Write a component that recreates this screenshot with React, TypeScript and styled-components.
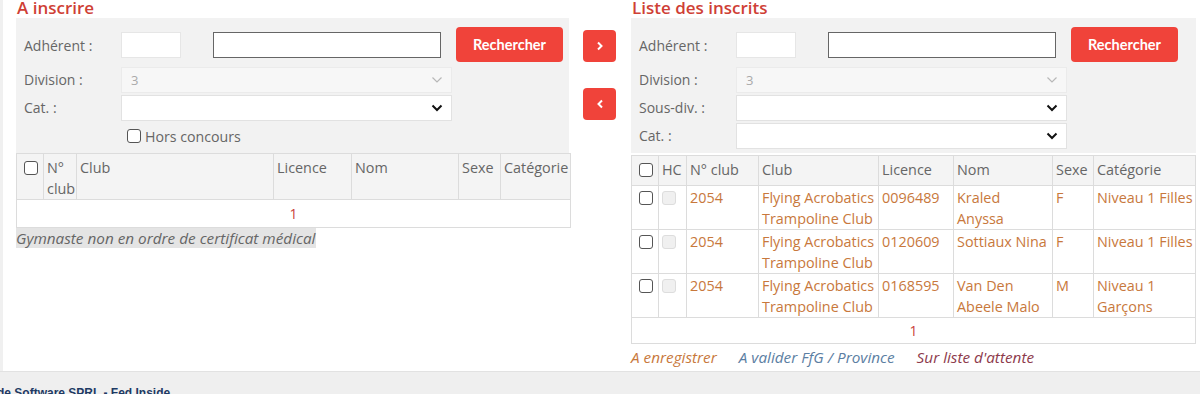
import React from "react";
import styled, { createGlobalStyle } from "styled-components";

const RED = "#f0433a";
const TITLE = "#cf3f36";
const ORANGE = "#c8783c";
const BLUE = "#5b7ea2";
const MAROON = "#8d3a4b";

const GlobalStyle = createGlobalStyle`
  html, body {
    margin: 0;
    padding: 0;
    background: #fff;
    font-family: "Open Sans", "Liberation Sans", sans-serif;
    font-size: 14px;
    color: #555;
  }
  * { box-sizing: border-box; }
`;

const Page = styled.div`
  width: 1200px;
  height: 394px;
  overflow: hidden;
  display: flex;
  flex-direction: column;
`;

const Main = styled.main`
  flex: 1;
  display: flex;
  align-items: flex-start;
  padding-left: 13px;
  border-left: 3px solid #f0f0f0;
`;

const Column = styled.section<{ $width: number }>`
  width: ${(p) => p.$width}px;
  flex: none;
`;

const Title = styled.h2`
  margin: 0;
  height: 18px;
  line-height: 18px;
  font-size: 17px;
  font-weight: 600;
  color: ${TITLE};
  padding-left: 1px;
  margin-top: -1px;
  margin-bottom: 1px;
`;

const Panel = styled.div<{ $width: number }>`
  width: ${(p) => p.$width}px;
  background: #f2f2f2;
  padding: 9px 7px 4px 8px;
  display: grid;
  grid-template-columns: 97px 1fr;
  align-items: center;
  row-gap: 2px;
`;

const Label = styled.label`
  color: #666;
  font-size: 14px;
  line-height: 20px;
`;

const SearchRow = styled.div`
  display: flex;
  align-items: center;
  height: 35px;
  margin-bottom: 3px;
`;

const TextInput = styled.div<{ $width: number; $dark?: boolean; $gap?: number }>`
  width: ${(p) => p.$width}px;
  height: 26px;
  margin-left: ${(p) => p.$gap ?? 0}px;
  background: #fff;
  border: 1px solid ${(p) => (p.$dark ? "#666" : "#e6e6e6")};
  flex: none;
`;

const Search = styled.button`
  margin-left: 15px;
  width: 107px;
  height: 35px;
  border: none;
  border-radius: 4px;
  background: ${RED};
  color: #fff;
  font-family: Lato, "Liberation Sans", sans-serif;
  font-weight: 700;
  font-size: 14.5px;
  padding: 0;
`;

const SelectBox = styled.div<{ $disabled?: boolean; $width: number }>`
  width: ${(p) => p.$width}px;
  height: 26px;
  display: flex;
  align-items: center;
  justify-content: space-between;
  padding: 0 8px 0 9px;
  background: ${(p) => (p.$disabled ? "#f7f7f7" : "#fff")};
  border: 1px solid ${(p) => (p.$disabled ? "#ebebeb" : "#e2e2e2")};
  color: #aaa;
  font-size: 13px;
`;

const CheckRow = styled.div`
  grid-column: 2;
  display: flex;
  align-items: center;
  gap: 4px;
  padding-left: 6px;
  height: 26px;
  color: #666;
  font-size: 14.2px;
`;

const Box = styled.span<{ $disabled?: boolean }>`
  display: inline-block;
  width: 14px;
  height: 14px;
  border-radius: 3px;
  border: 1px solid ${(p) => (p.$disabled ? "#ddd" : "#555")};
  background: ${(p) => (p.$disabled ? "#f0f0f0" : "#fff")};
  flex: none;
`;

const Table = styled.table<{ $width: number }>`
  width: ${(p) => p.$width}px;
  border-collapse: collapse;
  table-layout: fixed;
  border: 1px solid #dcdcdc;
  line-height: 21px;
  font-size: 14.4px;
`;

const HeadRow = styled.tr<{ $h: number }>`
  height: ${(p) => p.$h}px;
`;

const BodyRow = styled.tr`
  height: 44px;
`;

const Th = styled.th<{ $w: number }>`
  width: ${(p) => p.$w}px;
  text-align: left;
  vertical-align: top;
  font-weight: 400;
  color: #666;
  background: #f4f4f4;
  padding: 3px 0 0 3px;
  border-left: 1px solid #dcdcdc;
  border-bottom: 1px solid #dcdcdc;
  &:first-child { border-left: none; padding-left: 7px; }
`;

const Td = styled.td`
  vertical-align: top;
  color: ${ORANGE};
  padding: 1px 0 0 3px;
  border-left: 1px solid #dcdcdc;
  border-bottom: 1px solid #dcdcdc;
  background: #fff;
  white-space: pre-line;
  &:first-child { border-left: none; padding-left: 7px; }
`;

const BoxCell = styled.div`
  height: 21px;
  display: flex;
  align-items: center;
`;

const Pager = styled.td<{ $h: number }>`
  height: ${(p) => p.$h}px;
  text-align: center;
  color: #c9403a;
  background: #fff;
  padding: 0;
  font-size: 14px;
`;

const Note = styled.p`
  margin: 0;
  font-style: italic;
  font-size: 15.3px;
  color: #666;
  line-height: 20px;
  span { background: #e4e4e4; padding-right: 1px; }
`;

const Arrows = styled.div`
  width: 61px;
  flex: none;
  display: flex;
  flex-direction: column;
  align-items: flex-start;
  gap: 26px;
  padding: 30px 0 0 13px;
`;

const ArrowButton = styled.button`
  width: 33px;
  height: 32px;
  border: none;
  border-radius: 4px;
  background: ${RED};
  display: flex;
  align-items: center;
  justify-content: center;
  padding: 0;
`;

const Legend = styled.div`
  display: flex;
  gap: 22px;
  margin-top: 3px;
  font-style: italic;
  font-size: 15.3px;
  line-height: 20px;
`;

const Tag = styled.span<{ $color: string }>`
  color: ${(p) => p.$color};
`;

const Footer = styled.footer`
  height: 23px;
  flex: none;
  background: #efefef;
  border-top: 1px solid #e2e2e2;
  padding: 15px 0 0 0;
  font-family: "Liberation Sans", sans-serif;
  font-weight: 700;
  font-size: 12px;
  line-height: 13px;
  color: #1e3a64;
  white-space: nowrap;
  text-indent: -3px;
`;

const Chevron = ({ light }: { light?: boolean }) => (
  <svg width="12" height="8" viewBox="0 0 12 8">
    <path
      d="M1.5 1.5 L6 6 L10.5 1.5"
      fill="none"
      stroke={light ? "#b8b8b8" : "#111"}
      strokeWidth={light ? 1.2 : 2}
    />
  </svg>
);

const Arrow = ({ dir }: { dir: "left" | "right" }) => (
  <svg width="8" height="10" viewBox="0 0 8 10">
    <path
      d={dir === "right" ? "M2 1.5 L5.5 5 L2 8.5" : "M6 1.5 L2.5 5 L6 8.5"}
      fill="none"
      stroke="#fff"
      strokeWidth="2"
    />
  </svg>
);

type Row = {
  club: string;
  name: string;
  licence: string;
  nom: string;
  sexe: string;
  cat: string;
};

const rows: Row[] = [
  { club: "2054", name: "Flying Acrobatics Trampoline Club", licence: "0096489", nom: "Kraled\nAnyssa", sexe: "F", cat: "Niveau 1 Filles" },
  { club: "2054", name: "Flying Acrobatics Trampoline Club", licence: "0120609", nom: "Sottiaux Nina", sexe: "F", cat: "Niveau 1 Filles" },
  { club: "2054", name: "Flying Acrobatics Trampoline Club", licence: "0168595", nom: "Van Den Abeele Malo", sexe: "M", cat: "Niveau 1 Garçons" },
];

function SearchForm({ withSubDiv, width }: { withSubDiv?: boolean; width: number }) {
  return (
    <Panel $width={width}>
      <Label>Adhérent :</Label>
      <SearchRow>
        <TextInput $width={60} />
        <TextInput $width={228} $dark $gap={32} />
        <Search>Rechercher</Search>
      </SearchRow>
      <Label>Division :</Label>
      <SelectBox $disabled $width={331}>
        3 <Chevron light />
      </SelectBox>
      {withSubDiv && (
        <>
          <Label>Sous-div. :</Label>
          <SelectBox $width={331}>
            <span />
            <Chevron />
          </SelectBox>
        </>
      )}
      <Label>Cat. :</Label>
      <SelectBox $width={331}>
        <span />
        <Chevron />
      </SelectBox>
      {!withSubDiv && (
        <CheckRow>
          <Box /> Hors concours
        </CheckRow>
      )}
    </Panel>
  );
}

export default function App() {
  return (
    <Page>
      <GlobalStyle />
      <Main>
        <Column $width={554}>
          <Title>A inscrire</Title>
          <SearchForm width={553} />
          <Table $width={554}>
            <thead>
              <HeadRow $h={45}>
                <Th $w={27}>
                  <BoxCell>
                    <Box />
                  </BoxCell>
                </Th>
                <Th $w={33}>N° club</Th>
                <Th $w={197}>Club</Th>
                <Th $w={78}>Licence</Th>
                <Th $w={107}>Nom</Th>
                <Th $w={42}>Sexe</Th>
                <Th $w={70}>Catégorie</Th>
              </HeadRow>
            </thead>
            <tbody>
              <tr>
                <Pager $h={28} colSpan={7}>1</Pager>
              </tr>
            </tbody>
          </Table>
          <Note>
            <span>Gymnaste non en ordre de certificat médical</span>
          </Note>
        </Column>

        <Arrows>
          <ArrowButton>
            <Arrow dir="right" />
          </ArrowButton>
          <ArrowButton>
            <Arrow dir="left" />
          </ArrowButton>
        </Arrows>

        <Column $width={565}>
          <Title>Liste des inscrits</Title>
          <SearchForm withSubDiv width={565} />
          <Table $width={564} style={{ marginTop: 2 }}>
            <thead>
              <HeadRow $h={30}>
                <Th $w={27}>
                  <BoxCell>
                    <Box />
                  </BoxCell>
                </Th>
                <Th $w={28}>HC</Th>
                <Th $w={72}>N° club</Th>
                <Th $w={120}>Club</Th>
                <Th $w={75}>Licence</Th>
                <Th $w={99}>Nom</Th>
                <Th $w={41}>Sexe</Th>
                <Th $w={102}>Catégorie</Th>
              </HeadRow>
            </thead>
            <tbody>
              {rows.map((r) => (
                <BodyRow key={r.licence}>
                  <Td>
                    <BoxCell>
                      <Box />
                    </BoxCell>
                  </Td>
                  <Td>
                    <BoxCell>
                      <Box $disabled />
                    </BoxCell>
                  </Td>
                  <Td>{r.club}</Td>
                  <Td>{r.name}</Td>
                  <Td>{r.licence}</Td>
                  <Td>{r.nom}</Td>
                  <Td>{r.sexe}</Td>
                  <Td>{r.cat}</Td>
                </BodyRow>
              ))}
              <tr>
                <Pager $h={26} colSpan={8}>1</Pager>
              </tr>
            </tbody>
          </Table>
          <Legend>
            <Tag $color={ORANGE}>A enregistrer</Tag>
            <Tag $color={BLUE}>A valider FfG / Province</Tag>
            <Tag $color={MAROON}>Sur liste d'attente</Tag>
          </Legend>
        </Column>
      </Main>
      <Footer>de Software SPRL - Fed Inside</Footer>
    </Page>
  );
}
